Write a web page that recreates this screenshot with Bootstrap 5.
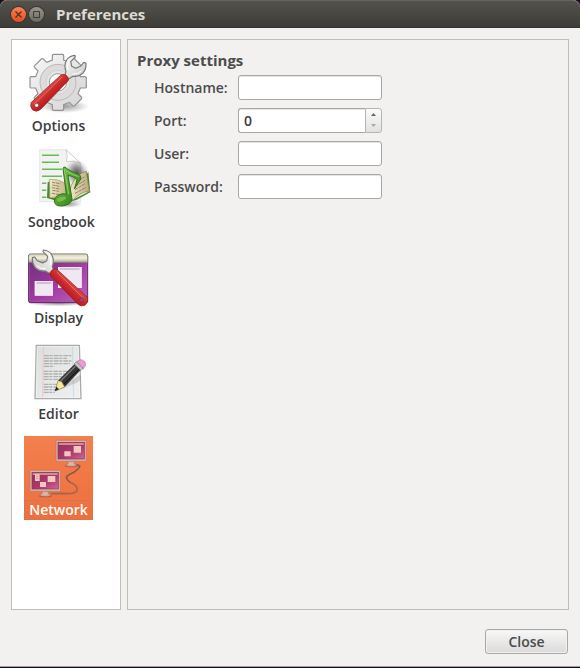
<!DOCTYPE html>
<html lang="en">
<head>
<meta charset="utf-8">
<meta name="viewport" content="width=device-width, initial-scale=1">
<title>Preferences</title>
<link href="https://cdn.jsdelivr.net/npm/bootstrap@5.3.0/dist/css/bootstrap.min.css" rel="stylesheet">
<style>
body{background:#1f0c19;color:#4c4c4c;font:600 14px/20px "Open Sans","Noto Sans",sans-serif}
.window{background:#f2f1f0;border-bottom:1px solid #a19d9e;border-radius:7px 7px 0 0;margin-bottom:1px;min-height:calc(100vh - 1px)}
.titlebar{height:28px;background:linear-gradient(#53524c,#3d3c38);border-top:1px solid #66645e;border-bottom:1px solid #31302c;border-radius:7px 7px 0 0;padding:0 11px;gap:3px}
.titlebar h1{font-size:15px;line-height:20px;font-weight:700;color:#dfdbd2;margin:0 0 0 9px}
.wbtn{width:15px;height:15px;border-radius:50%;border:0;padding:0;line-height:0;background:linear-gradient(#9a968c,#6c6961);box-shadow:0 0 0 1px #35342f}
.wbtn-close{background:linear-gradient(#fa8159,#e24f1c)}
.content{padding:11px 11px 12px}
.panels{gap:6px}
.categories{width:110px;background:#fff;border:1px solid #bfbdba;padding:12px;gap:12px}
.category{min-width:69px;border:0;padding:0;background:none;color:#3c3c3c;text-align:center;font-weight:600}
.category svg{display:block;margin:0 auto}
.category span{display:block;height:20px;padding:0 3px;border:1px dotted transparent;line-height:18px}
.category.active{background:linear-gradient(#f37f4f,#ef6f3c);color:#fff}
.category.active span{border-color:#a58270}
.pane{border:1px solid #bfbdba;padding:10px 9px}
.pane legend{font-size:15px;line-height:20px;font-weight:700;margin-bottom:5px;float:none}
.fields{padding-left:17px;gap:8px}
.fields label{width:84px}
.fields .field{width:144px;height:25px}
.fields .form-control{border:1px solid #aaa7a2;border-radius:3px;padding:0 5px;font-size:14px;line-height:20px;font-weight:600;color:#3c3c3c;background:#fff;height:25px;min-height:25px;box-shadow:inset 0 1px 0 #e6e5e3;appearance:textfield}
.form-control::-webkit-inner-spin-button{appearance:none;margin:0}
.fields .port{border-radius:3px 0 0 3px;border-right:0}
.spin{width:17px;border:1px solid #b8b5b1;border-radius:0 3px 3px 0;background:linear-gradient(#fbfbfb,#e2e1e0)}
.spin button{height:11px;border:0;padding:0;background:none;line-height:0}
.actions{padding:19px 1px 0 0}
.btn-close-window{width:83px;height:25px;padding:0;border:1px solid #aaa8a4;border-radius:3px;background:linear-gradient(#f8f8f8,#dadada);color:#4c4c4c;font-size:14px;line-height:20px;font-weight:600;box-shadow:inset 0 0 0 1px #f1f1f1}
</style>
<script src="https://cdn.jsdelivr.net/npm/bootstrap@5.3.0/dist/js/bootstrap.bundle.min.js"></script>
</head>
<body>
<div class="window d-flex flex-column">
<header class="titlebar d-flex align-items-center">
<button class="wbtn wbtn-close" type="button" aria-label="Close window"><svg width="15" height="15" viewBox="0 0 15 15"><path d="M4.500 4.500l6 6M10.500 4.500l-6 6" stroke="#50301f" stroke-width="1.300"/></svg></button>
<button class="wbtn" type="button" aria-label="Maximize window"><svg width="15" height="15" viewBox="0 0 15 15"><path d="M4.500 4.500h6v6h-6z" fill="none" stroke="#3c3b37"/></svg></button>
<h1>Preferences</h1>
</header>
<main class="content d-flex flex-column flex-grow-1">
<div class="panels d-flex flex-grow-1">
<nav class="categories d-flex flex-column align-items-start flex-shrink-0" aria-label="Categories">
<button class="category" type="button">
<svg width="69" height="64" viewBox="36 21 207 192">
<defs>
<linearGradient id="gear" x2="1" y2="1"><stop stop-color="#f7f7f7"/><stop offset="1" stop-color="#d3d3d3"/></linearGradient>
<linearGradient id="redh" x1="0" y1="0" x2="1" y2="1"><stop offset=".3" stop-color="#e8645f"/><stop offset=".5" stop-color="#cb2a2a"/><stop offset=".7" stop-color="#9e1212"/></linearGradient>
<radialGradient id="shade"><stop stop-color="#000" stop-opacity=".4"/><stop offset="1" stop-color="#000" stop-opacity="0"/></radialGradient>
<linearGradient id="steel" x2="1" y2="1"><stop stop-color="#fff"/><stop offset="1" stop-color="#c4c5c0"/></linearGradient>
<g id="spanner">
<path d="M158 93L162 80Q155 61 164 45Q172 32 189 31L190 36L176 50L179 64L191 70L207 63L215 52L222 54Q223 72 214 83Q202 96 183 94L168 103Z" fill="url(#steel)" stroke="#777974" stroke-width="3.500" stroke-linejoin="round"/>
<path d="M171 47Q162 59 168 76M181 87Q198 89 209 77" fill="none" stroke="#fff" stroke-width="3"/>
<path d="M147 90Q161 83 170 101L168 108L86 193Q74 203 62 195Q52 184 58 172Z" fill="url(#redh)" stroke="#8d1a1a" stroke-width="2"/>
<path d="M149 97L66 178" stroke="#ef8680" stroke-width="3" opacity=".7"/>
</g>
</defs>
<ellipse cx="155" cy="184" rx="76" ry="20" fill="url(#shade)"/>
<path d="M121 45L121 32Q121 28 125 28L151 28Q155 28 155 32L155 45L172 52L182 42Q185 39 188 42L208 62Q211 65 208 68L198 78L205 95L219 95Q223 95 223 99L223 125Q223 129 219 129L205 129L198 146L208 156Q211 159 208 162L188 182Q185 185 182 182L172 172L155 179L155 192Q155 196 151 196L125 196Q121 196 121 192L121 179L104 172L94 182Q91 185 88 182L68 162Q65 159 68 156L78 146L71 129L58 129Q54 129 54 125L54 99Q54 95 58 95L71 95L78 78L68 68Q65 65 68 62L88 42Q91 39 94 42L104 52Z" fill="url(#gear)" stroke="#929292" stroke-width="3.500"/>
<circle cx="138" cy="112" r="54" fill="#dcdcdc" stroke="#b9b9b9" stroke-width="3"/>
<circle cx="138" cy="112" r="36" fill="#e4e4e4" stroke="#d4d4d4" stroke-width="4"/>
<circle cx="138" cy="112" r="26" fill="#fff" stroke="#999" stroke-width="3"/>
<use href="#spanner"/><circle cx="74" cy="181" r="6" fill="#fff" stroke="#9c2020" stroke-width="2"/>
</svg><span>Options</span></button>
<button class="category" type="button">
<svg width="69" height="64" viewBox="48 24 207 192">
<defs><linearGradient id="note" x2="1" y2="1"><stop stop-color="#83ce52"/><stop offset="1" stop-color="#2a7412"/></linearGradient><linearGradient id="book" x2="1" y2="0"><stop stop-color="#f2e8c7"/><stop offset="1" stop-color="#b9aa7d"/></linearGradient></defs>
<path d="M86 29H165L209 70V185H86Z" fill="#f2f2f2" stroke="#e0e0e0" stroke-width="2"/>
<path d="M165 29L209 70Q186 59 166 65Q172 49 165 29Z" fill="#fff" stroke="#bdbdbd" stroke-width="2"/>
<path d="M93 46H144M93 67H144M93 88H153M93 109H153M93 130H106M93 151H106M93 172H106" stroke="#63bd51" stroke-width="4.500"/>
<ellipse cx="200" cy="100" rx="36" ry="44" fill="url(#shade)" transform="rotate(-25 200 100)"/>
<ellipse cx="196" cy="98" rx="28" ry="34" fill="url(#shade)"/>
<ellipse cx="172" cy="192" rx="42" ry="12" fill="url(#shade)"/>
<path d="M110 127L108 174L131 181Q161 170 181 184L196 180L238 157L232 96L226 104L236 153L186 179L116 172L118 124Z" fill="#438b2b"/>
<path d="M115 118Q141 116 161 129L177 179Q151 166 117 173Z" fill="url(#book)" stroke="#a2946f" stroke-width="2"/>
<path d="M177 177Q172 149 186 126Q201 100 226 94L235 153Q207 157 186 180Z" fill="url(#book)" stroke="#806e4e" stroke-width="2"/>
<path d="M123 127L148 131M124 135L145 139M122 143L148 147M124 151L144 154M122 160L143 163M195 127L220 111M194 138L222 121M192 149L222 131M192 160L225 142" stroke="#81735a" stroke-width="2.500" stroke-dasharray="10 2"/>
<path d="M156 86Q157 80 162 81Q171 91 205 104Q215 112 203 127L190 147Q196 130 198 118Q187 108 171 106L183 177Q181 194 154 198Q131 199 130 184Q132 166 151 162Q160 160 166 163Z" fill="url(#note)" stroke="#2b7615" stroke-width="3"/>
<path d="M160 88L173 163M165 91Q174 100 203 110" fill="none" stroke="#9ada70" stroke-width="2.500"/>
<ellipse cx="152" cy="177" rx="14" ry="6" fill="#8acb66" transform="rotate(-18 152 177)" opacity=".65"/>
</svg><span>Songbook</span></button>
<button class="category" type="button">
<svg width="69" height="64" viewBox="36 12 207 192">
<defs><linearGradient id="purple" x2="1" y2="1"><stop stop-color="#693077"/><stop offset=".5" stop-color="#9d389e"/><stop offset="1" stop-color="#bd64b9"/></linearGradient><linearGradient id="cream" x2="0" y2="1"><stop stop-color="#d4d2b9"/><stop offset=".5" stop-color="#f2f1df"/><stop offset="1" stop-color="#aaa98f"/></linearGradient></defs>
<ellipse cx="140" cy="190" rx="94" ry="9" fill="url(#shade)"/>
<rect x="50" y="43" width="177" height="145" rx="5" fill="url(#purple)" stroke="#641d67" stroke-width="3"/>
<path d="M53 67H224V183H53Z" fill="none" stroke="#a75bad" stroke-width="2"/>
<path d="M50 67V48Q50 42 56 42H221Q227 42 227 48V67Z" fill="url(#cream)" stroke="#858570" stroke-width="2.500"/>
<rect x="139" y="82" width="69" height="61" fill="#f1e7f2" stroke="#fff" stroke-width="2"/><path d="M144 87H203" stroke="#aaa0ad" stroke-width="3"/>
<rect x="69" y="124" width="53" height="42" fill="#f1e7f2" stroke="#fff" stroke-width="2"/><path d="M74 129H118" stroke="#aaa0ad" stroke-width="3"/>
<use href="#spanner" transform="matrix(-1 0 0 1 283 -1)"/><circle cx="209" cy="180" r="6" fill="#9f4991" stroke="#951d2c" stroke-width="2"/>
</svg><span>Display</span></button>
<button class="category" type="button">
<svg width="69" height="64" viewBox="36 12 207 192">
<defs><linearGradient id="paper" x2="1" y2="1"><stop stop-color="#dcdede"/><stop offset="1" stop-color="#f0f0f0"/></linearGradient></defs>
<path d="M73 28H202L207 188H69Z" fill="url(#paper)" stroke="#aaa" stroke-width="4" stroke-linejoin="round"/>
<path d="M76 32H199L203 184H73Z" fill="none" stroke="#f8f8f8" stroke-width="2"/>
<path d="M94 32L92 184" stroke="#f1b8b4" stroke-width="2"/><path d="M181 32L185 184" stroke="#b7d2ec" stroke-width="2"/>
<path d="M96 59H178M96 67H165M96 75H178M96 83H174M96 91H126M95 106H170M95 114H165M95 122H160M95 130H151M95 145H146M95 153H141M95 161H137M95 169H128" stroke="#b0b0b0" stroke-width="4" stroke-dasharray="15 2 9 3"/>
<path d="M135 163L203 116Q213 127 197 139L155 157Z" fill="#555" opacity=".2"/>
<path d="M130 165L138 134L188 84L206 102L158 153Z" fill="#343434"/>
<path d="M146 135L190 91" stroke="#7b7b7b" stroke-width="4"/><path d="M154 146L202 99" stroke="#111" stroke-width="3"/>
<path d="M130 165L138 134L149 137L158 153Z" fill="#f4e99a" stroke="#958650" stroke-width="1.500"/><path d="M128 166L133 152L141 160Z" fill="#222"/>
<path d="M186 84L194 76L216 96L206 103Z" fill="#b4b4b4" stroke="#777" stroke-width="2"/><path d="M190 81L210 101" stroke="#eee" stroke-width="2"/>
<path d="M195 77Q206 66 217 76Q226 87 214 97Z" fill="#ee9ad7" stroke="#ba719f" stroke-width="2"/>
</svg><span>Editor</span></button>
<button class="category active" type="button" aria-current="page">
<svg width="69" height="64" viewBox="36 18 207 192">
<defs><linearGradient id="screen" x2="1" y2="1"><stop stop-color="#943355"/><stop offset=".55" stop-color="#ac376f"/><stop offset="1" stop-color="#cd6790"/></linearGradient></defs>
<path d="M190 105Q211 104 199 116Q188 128 171 134Q155 142 173 156Q201 168 195 182Q186 193 153 190L116 191" fill="none" stroke="#a16550" stroke-width="5"/>
<path d="M190 105Q211 104 199 116Q188 128 171 134Q155 142 173 156" fill="none" stroke="#825447" stroke-width="3"/>
<g id="monitor"><ellipse cx="178" cy="108" rx="20" ry="4" fill="#96472c" opacity=".6"/>
<path d="M168 93H187V101L195 105Q192 109 178 109Q164 109 160 105L168 101Z" fill="#d9b5a8" stroke="#a87160" stroke-width="2"/>
<rect x="132" y="31" width="91" height="63" rx="3" fill="#ddb2a4" stroke="#b77966" stroke-width="2"/>
<rect x="138" y="37" width="79" height="50" fill="url(#screen)" stroke="#8b3652" stroke-width="2"/>
<path d="M140 42H215" stroke="#df9d9c" stroke-width="5"/></g>
<path d="M185 48H207V68H185ZM157 64H176V79H157Z" fill="#f5c8bd"/>
<use href="#monitor" x="-78" y="90"/>
<path d="M107 138H130V156H107ZM84 156H102V171H84ZM69 133H83V153H69Z" fill="#f5c8bd"/><path d="M72 139H79M72 146H79" stroke="#bb7984" stroke-width="2"/>
</svg><span>Network</span></button>
</nav>
<form class="pane flex-grow-1">
<fieldset>
<legend>Proxy settings</legend>
<div class="fields d-flex flex-column">
<div class="d-flex align-items-center"><label for="host">Hostname:</label><div class="field"><input class="form-control" id="host" type="text"></div></div>
<div class="d-flex align-items-center"><label for="port">Port:</label><div class="field d-flex"><input class="form-control port flex-fill" id="port" type="number" value="0" min="0"><div class="spin d-flex flex-column flex-shrink-0"><button type="button" aria-label="Increase port"><svg width="5" height="3" viewBox="0 0 5 3"><path d="M0 3L2.500 0L5 3Z" fill="#666"/></svg></button><button type="button" aria-label="Decrease port"><svg width="5" height="3" viewBox="0 0 5 3"><path d="M0 0H5L2.500 3Z" fill="#aaa"/></svg></button></div></div></div>
<div class="d-flex align-items-center"><label for="user">User:</label><div class="field"><input class="form-control" id="user" type="text"></div></div>
<div class="d-flex align-items-center"><label for="pass">Password:</label><div class="field"><input class="form-control" id="pass" type="password"></div></div>
</div>
</fieldset>
</form>
</div>
<div class="actions d-flex justify-content-end"><button class="btn btn-close-window" type="button">Close</button></div>
</main>
</div>
</body>
</html>
